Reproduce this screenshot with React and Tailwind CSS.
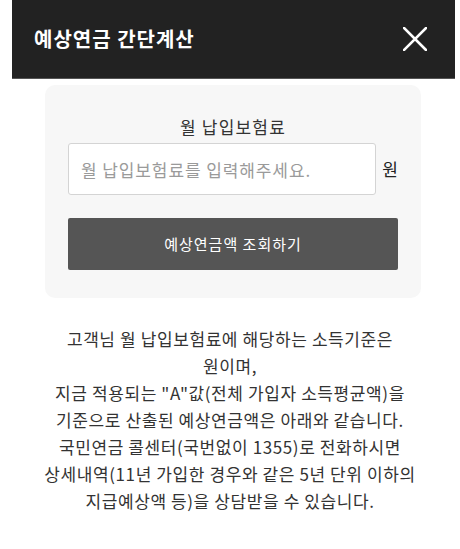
import React from 'react';

const font = { fontFamily: '"Noto Sans CJK KR", "Noto Sans", sans-serif' };

export default function App() {
  return (
    <div className="min-h-screen bg-white w-[460px]" style={font}>
      <div className="ml-[12px] w-[443px]">
        <header className="h-[79px] bg-[#222222] flex items-center justify-between pl-[22px] pr-[28px] border-b border-[#555]">
          <h1 className="text-[20px] font-bold text-white tracking-[1px]">예상연금 간단계산</h1>
          <svg width="24" height="24" viewBox="0 0 24 24" className="text-white">
            <path d="M1 1L23 23M23 1L1 23" stroke="currentColor" strokeWidth="2.6" strokeLinecap="square" />
          </svg>
        </header>
      </div>

      <section className="mt-[6px] ml-[45px] w-[376px] h-[213px] bg-[#f7f7f7] rounded-[10px] pt-[30px] px-[23px]">
        <p className="text-center text-[17px] text-[#333] leading-[24px] tracking-[1.2px]">월 납입보험료</p>
        <div className="mt-[4px] flex items-center gap-[6px]">
          <input
            className="w-[309px] h-[52px] bg-white border border-[#d4d4d4] rounded-[3px] px-[12px] text-[17px] tracking-[0.9px] text-[#333] placeholder:text-[#9a9a9a] outline-none"
            placeholder="월 납입보험료를 입력해주세요."
          />
          <span className="text-[17px] text-[#222]">원</span>
        </div>
        <button className="mt-[23px] w-[330px] h-[52px] bg-[#555555] rounded-[2px] text-white text-[15px] tracking-[1px]">
          예상연금액 조회하기
        </button>
      </section>

      <div className="mt-[27px] text-center text-[17px] leading-[27px] text-[#333] tracking-[0.6px]">
        <p>고객님 월 납입보험료에 해당하는 소득기준은</p>
        <p>원이며,</p>
        <p>지금 적용되는 "A"값(전체 가입자 소득평균액)을</p>
        <p>기준으로 산출된 예상연금액은 아래와 같습니다.</p>
        <p>국민연금 콜센터(국번없이 1355)로 전화하시면</p>
        <p>상세내역(11년 가입한 경우와 같은 5년 단위 이하의</p>
        <p>지급예상액 등)을 상담받을 수 있습니다.</p>
      </div>
    </div>
  );
}
